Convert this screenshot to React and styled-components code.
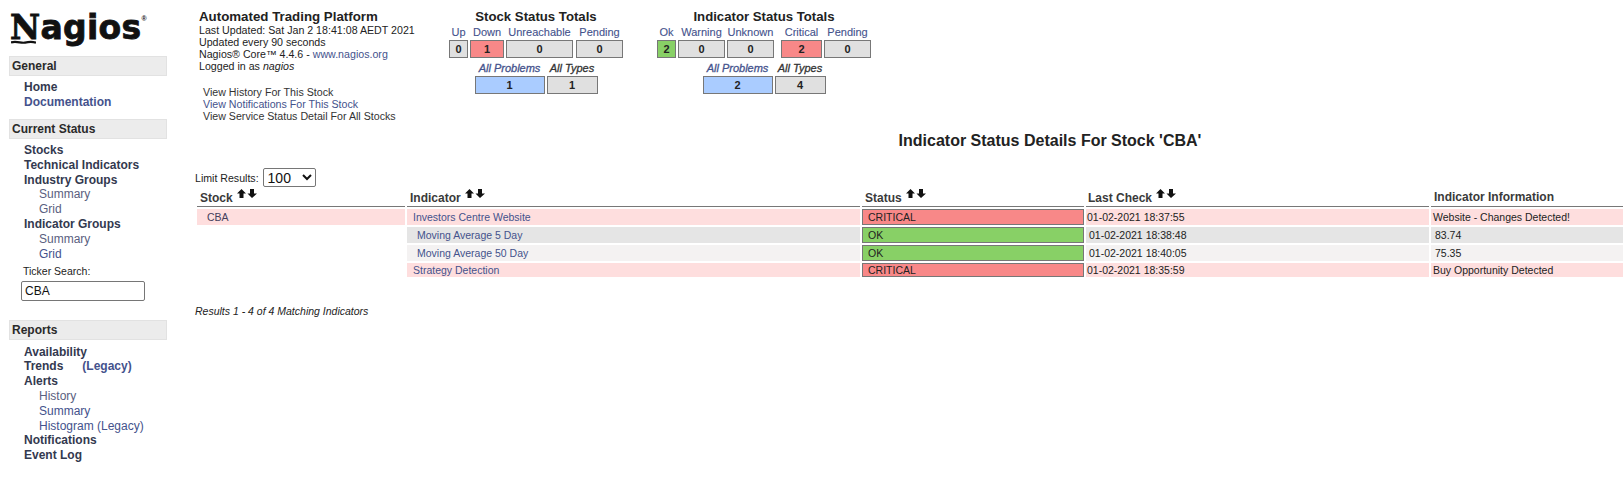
import React from 'react';
import styled, { createGlobalStyle } from 'styled-components';

const GlobalStyle = createGlobalStyle`
  html, body {
    margin: 0;
    background: #fff;
    overflow: hidden;
    font-family: "Liberation Sans", Arial, sans-serif;
    color: #222;
  }
`;

const BLUE = '#44528c';
const DARK = '#33394f';

const Page = styled.div`
  display: flex;
  width: 1623px;
  height: 478px;
  overflow: hidden;
`;

// sidebar
const Sidebar = styled.nav`
  flex: 0 0 195px;
  box-sizing: border-box;
  padding: 12px 0 0 9px;
`;

const Logo = styled.div`
  position: relative;
  height: 44px;
  font-family: "DejaVu Sans", sans-serif;
  font-weight: 700;
  font-size: 33px;
  line-height: 31px;
  letter-spacing: 0.3px;
  color: #111;
  padding-left: 1px;
  -webkit-text-stroke: 0.8px #111;
  b {
    font-family: "DejaVu Serif", serif;
  }
  sup {
    font-size: 7px;
    font-family: "Liberation Sans", sans-serif;
    vertical-align: 18px;
    line-height: 0;
    -webkit-text-stroke: 0;
  }
  svg {
    position: absolute;
    left: 2px;
    top: 28px;
  }
`;

const SectionBar = styled.div`
  box-sizing: border-box;
  width: 158px;
  height: 20px;
  line-height: 18px;
  padding-left: 2px;
  background: #ececec;
  border: 1px solid #e2e2e2;
  font-size: 12px;
  font-weight: 700;
  color: #2a2a2a;
`;

const NavList = styled.div`
  padding: 4.2px 0 0 ${p => p.$pad || 15}px;
  margin-bottom: ${p => p.$gap}px;
`;

const NavLink = styled.div`
  height: 14.8px;
  line-height: 14.8px;
  font-size: 12px;
  font-weight: 700;
  color: ${p => p.$color || DARK};
  white-space: nowrap;
  span { color: ${BLUE}; margin-left: 19px; }
`;

const SubLink = styled.div`
  height: 14.8px;
  line-height: 14.8px;
  font-size: 12px;
  padding-left: 15px;
  color: ${p => p.$color || '#5a6080'};
  white-space: nowrap;
`;

const SearchLabel = styled.div`
  font-size: 10.5px;
  color: #222;
  margin: 5px 0 4px 14px;
  line-height: 12px;
`;

const SearchInput = styled.input`
  box-sizing: border-box;
  display: block;
  width: 124px;
  height: 20px;
  margin: 0 0 19px 12px;
  padding: 0 3px;
  border: 1px solid #767676;
  border-radius: 2px;
  font: 12px "Liberation Sans", sans-serif;
  color: #111;
`;

// main
const Main = styled.main`
  width: 1710px;
  flex: none;
`;

const TopRow = styled.header`
  display: flex;
  height: 126px;
  padding-top: 10px;
  box-sizing: border-box;
`;

const Info = styled.div`
  width: 254px;
  padding-left: 4px;
  box-sizing: border-box;
  font-size: 10.65px;
  line-height: 12px;
  color: #222;
  h1 {
    margin: 0;
    font-size: 13.3px;
    line-height: 14px;
    font-weight: 700;
    color: #222;
  }
  em { font-style: italic; }
`;

const InfoLink = styled.span`
  color: ${BLUE};
`;

const ViewLinks = styled.div`
  margin: 14px 0 0 4px;
  color: #333;
`;

const Totals = styled.section`
  width: ${p => p.$w}px;
  margin-right: ${p => p.$mr || 0}px;
  text-align: center;
  h2 {
    margin: 0;
    font-size: 13.2px;
    line-height: 14px;
    font-weight: 700;
    color: #222;
  }
`;

const TotalsRow = styled.div`
  display: grid;
  grid-template-columns: ${p => p.$cols};
  column-gap: 2px;
  justify-content: center;
  margin-top: ${p => p.$mt || 0}px;
`;

const TotalLabel = styled.div`
  font-size: 11px;
  line-height: 13px;
  height: 14px;
  white-space: nowrap;
  margin-left: ${p => p.$ml || 0}px;
  color: ${p => p.$color || BLUE};
  font-style: ${p => (p.$italic ? 'italic' : 'normal')};
  -webkit-text-stroke: ${p => (p.$italic ? 0.3 : 0.1)}px;
`;

const TotalBox = styled.div`
  box-sizing: border-box;
  height: 18px;
  line-height: 16px;
  margin-left: ${p => p.$ml || 0}px;
  border: 1px solid #777;
  font-size: 11px;
  font-weight: 700;
  color: #222;
  background: ${p => p.$bg || '#e0e0e0'};
`;

const PageTitle = styled.h3`
  margin: 0;
  height: 42px;
  padding-top: 6px;
  box-sizing: border-box;
  font-size: 16px;
  line-height: 18px;
  font-weight: 700;
  text-align: center;
  color: #222;
`;

const LimitRow = styled.div`
  display: flex;
  align-items: center;
  gap: 3px;
  font-size: 10.6px;
  color: #222;
  height: 19px;
`;

const LimitSelect = styled.select`
  box-sizing: border-box;
  width: 53px;
  height: 19px;
  margin-left: 1px;
  padding: 0;
  border: 1px solid #767676;
  border-radius: 2px;
  background: #fff;
  font: 14px "Liberation Sans", sans-serif;
  color: #111;
`;

const StatusTable = styled.table`
  width: 1710px;
  table-layout: fixed;
  border-collapse: separate;
  border-spacing: 2px;
`;

const HeadCell = styled.th`
  height: 14px;
  padding: ${p => (p.$lifted ? '1px 0 2px' : '2px 0 1px')} ${p => p.$pad || 3}px;
  padding-right: 0;
  text-align: left;
  font-size: 12px;
  line-height: 14px;
  font-weight: 700;
  color: #3a3a3a;
  border-bottom: 1px solid #777;
  white-space: nowrap;
  svg {
    margin-left: 4px;
    vertical-align: middle;
    position: relative;
    top: -5px;
  }
`;

const tones = {
  critical: '#fedede',
  even: '#e5e5e5',
  odd: '#f4f2f2',
  none: 'transparent',
};

const Cell = styled.td`
  height: ${p => (p.$short ? 14 : 16)}px;
  padding: 0 0 0 ${p => p.$pad || 0}px;
  font-size: 10.5px;
  line-height: 12px;
  color: ${p => p.$color || '#222'};
  background: ${p => tones[p.$tone || 'none']};
  white-space: nowrap;
`;

const StatusCell = styled.td`
  box-sizing: border-box;
  height: ${p => (p.$short ? 14 : 16)}px;
  padding: 0 0 0 5px;
  border: 1px solid #777;
  font-size: 10.5px;
  line-height: 12px;
  color: #222;
  background: ${p => (p.$ok ? '#88d066' : '#f88888')};
`;

const ResultNote = styled.div`
  margin-top: 26px;
  font-size: 10.5px;
  font-style: italic;
  color: #222;
`;

const SortArrows = () => (
  <svg width="20" height="9" viewBox="0 0 20 9">
    <path d="M4.5 0 L9 4.5 H6.5 V9 H2.5 V4.5 H0 Z" fill="#111" />
    <path d="M13 0 H17 V4.5 H20 L15 9 L10.5 4.5 H13 Z" fill="#111" />
  </svg>
);

const rows = [
  { name: 'Investors Centre Website', status: 'CRITICAL', time: '01-02-2021 18:37:55', info: 'Website - Changes Detected!', tone: 'critical' },
  { name: 'Moving Average 5 Day', status: 'OK', time: '01-02-2021 18:38:48', info: '83.74', tone: 'even' },
  { name: 'Moving Average 50 Day', status: 'OK', time: '01-02-2021 18:40:05', info: '75.35', tone: 'odd' },
  { name: 'Strategy Detection', status: 'CRITICAL', time: '01-02-2021 18:35:59', info: 'Buy Opportunity Detected', tone: 'critical', short: true },
];

export default function App() {
  return (
    <Page>
      <GlobalStyle />
      <Sidebar>
        <Logo>
          <b>N</b>agios<sup>®</sup>
          <svg width="25" height="4" viewBox="0 0 25 4">
            <path d="M0 2.4 C6 0.6 10 3.6 14 2.6 C18 1.6 21 1.4 25 2.6" stroke="#111" strokeWidth="2.2" fill="none" />
          </svg>
        </Logo>
        <SectionBar>General</SectionBar>
        <NavList $gap={9}>
          <NavLink>Home</NavLink>
          <NavLink $color={BLUE}>Documentation</NavLink>
        </NavList>
        <SectionBar>Current Status</SectionBar>
        <NavList $gap={-1}>
          <NavLink>Stocks</NavLink>
          <NavLink>Technical Indicators</NavLink>
          <NavLink>Industry Groups</NavLink>
          <SubLink>Summary</SubLink>
          <SubLink>Grid</SubLink>
          <NavLink>Indicator Groups</NavLink>
          <SubLink>Summary</SubLink>
          <SubLink $color={BLUE}>Grid</SubLink>
        </NavList>
        <SearchLabel>Ticker Search:</SearchLabel>
        <SearchInput defaultValue="CBA" />
        <SectionBar>Reports</SectionBar>
        <NavList $gap={0}>
          <NavLink>Availability</NavLink>
          <NavLink>Trends<span>(Legacy)</span></NavLink>
          <NavLink>Alerts</NavLink>
          <SubLink>History</SubLink>
          <SubLink $color={BLUE}>Summary</SubLink>
          <SubLink $color={BLUE}>Histogram (Legacy)</SubLink>
          <NavLink>Notifications</NavLink>
          <NavLink>Event Log</NavLink>
        </NavList>
      </Sidebar>
      <Main>
        <TopRow>
          <Info>
            <h1>Automated Trading Platform</h1>
            Last Updated: Sat Jan 2 18:41:08 AEDT 2021<br />
            Updated every 90 seconds<br />
            Nagios® Core™ 4.4.6 - <InfoLink>www.nagios.org</InfoLink><br />
            Logged in as <em>nagios</em>
            <ViewLinks>
              View History For This Stock<br />
              <InfoLink>View Notifications For This Stock</InfoLink><br />
              View Service Status Detail For All Stocks
            </ViewLinks>
          </Info>
          <Totals $w={174} $mr={34}>
            <h2>Stock Status Totals</h2>
            <TotalsRow $cols="19px 34px 67px 48px" $mt={2}>
              <TotalLabel>Up</TotalLabel>
              <TotalLabel>Down</TotalLabel>
              <TotalLabel>Unreachable</TotalLabel>
              <TotalLabel $ml={1}>Pending</TotalLabel>
              <TotalBox>0</TotalBox>
              <TotalBox $bg="#f88888">1</TotalBox>
              <TotalBox>0</TotalBox>
              <TotalBox $ml={1}>0</TotalBox>
            </TotalsRow>
            <TotalsRow $cols="70px 51px" $mt={4}>
              <TotalLabel $italic>All Problems</TotalLabel>
              <TotalLabel $italic $color="#333">All Types</TotalLabel>
              <TotalBox $bg="#aaccff">1</TotalBox>
              <TotalBox>1</TotalBox>
            </TotalsRow>
          </Totals>
          <Totals $w={214}>
            <h2>Indicator Status Totals</h2>
            <TotalsRow $cols="19px 47px 47px 46px 47px" $mt={2}>
              <TotalLabel>Ok</TotalLabel>
              <TotalLabel>Warning</TotalLabel>
              <TotalLabel>Unknown</TotalLabel>
              <TotalLabel $ml={5}>Critical</TotalLabel>
              <TotalLabel>Pending</TotalLabel>
              <TotalBox $bg="#88d066">2</TotalBox>
              <TotalBox>0</TotalBox>
              <TotalBox>0</TotalBox>
              <TotalBox $bg="#f88888" $ml={5}>2</TotalBox>
              <TotalBox>0</TotalBox>
            </TotalsRow>
            <TotalsRow $cols="70px 51px" $mt={4}>
              <TotalLabel $italic>All Problems</TotalLabel>
              <TotalLabel $italic $color="#333">All Types</TotalLabel>
              <TotalBox $bg="#aaccff">2</TotalBox>
              <TotalBox>4</TotalBox>
            </TotalsRow>
          </Totals>
        </TopRow>
        <PageTitle>Indicator Status Details For Stock 'CBA'</PageTitle>
        <LimitRow>
          Limit Results:
          <LimitSelect defaultValue="100">
            <option>25</option>
            <option>50</option>
            <option>100</option>
          </LimitSelect>
        </LimitRow>
        <StatusTable>
          <colgroup>
            <col style={{ width: 208 }} />
            <col style={{ width: 453 }} />
            <col style={{ width: 222 }} />
            <col style={{ width: 343 }} />
            <col />
          </colgroup>
          <thead>
            <tr>
              <HeadCell>Stock<SortArrows /></HeadCell>
              <HeadCell>Indicator<SortArrows /></HeadCell>
              <HeadCell>Status<SortArrows /></HeadCell>
              <HeadCell $pad={2}>Last Check<SortArrows /></HeadCell>
              <HeadCell $lifted>Indicator Information</HeadCell>
            </tr>
          </thead>
          <tbody>
            {rows.map((r, i) => {
              const crit = r.tone === 'critical';
              return (
                <tr key={r.name}>
                  {i === 0
                    ? <Cell $tone="critical" $pad={10} $color="#44405c">CBA</Cell>
                    : <Cell $short={r.short} />}
                  <Cell $tone={r.tone} $short={r.short} $pad={crit ? 6 : 10} $color={BLUE}>{r.name}</Cell>
                  <StatusCell $ok={r.status === 'OK'} $short={r.short}>{r.status}</StatusCell>
                  <Cell $tone={r.tone} $short={r.short} $pad={crit ? 1 : 3}>{r.time}</Cell>
                  <Cell $tone={r.tone} $short={r.short} $pad={crit ? 2 : 4}>{r.info}</Cell>
                </tr>
              );
            })}
          </tbody>
        </StatusTable>
        <ResultNote>Results 1 - 4 of 4 Matching Indicators</ResultNote>
      </Main>
    </Page>
  );
}
